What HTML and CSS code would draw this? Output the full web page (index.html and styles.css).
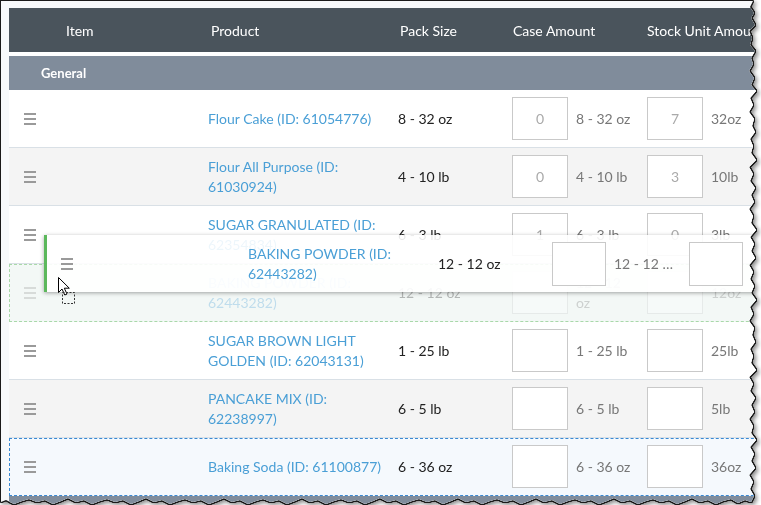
FILE: index.html
```html
<!DOCTYPE html>
<html>
<head>
<meta charset="utf-8">
<link rel="stylesheet" href="styles.css">
</head>
<body>
<div class="shot">
  <div class="frame">
    <div class="table">
      <div class="cols head">
        <div class="hc"></div>
        <div class="hc">Item</div>
        <div class="hc">Product</div>
        <div class="hc h-pack">Pack Size</div>
        <div class="hc h-case">Case Amount</div>
        <div class="hc h-stock">Stock Unit Amount</div>
      </div>
      <div class="gap"></div>
      <div class="group">General</div>

      <div class="cols row">
        <div class="c-handle"><span class="grip"></span></div>
        <div></div>
        <div class="c-prod">Flour Cake (ID: 61054776)</div>
        <div class="c-pack">8 - 32 oz</div>
        <div class="c-amt"><span class="box">0</span><span class="unit">8 - 32 oz</span></div>
        <div class="c-amt"><span class="box">7</span><span class="unit">32oz</span></div>
      </div>
      <div class="cols row alt">
        <div class="c-handle"><span class="grip"></span></div>
        <div></div>
        <div class="c-prod">Flour All Purpose (ID: 61030924)</div>
        <div class="c-pack">4 - 10 lb</div>
        <div class="c-amt"><span class="box">0</span><span class="unit">4 - 10 lb</span></div>
        <div class="c-amt"><span class="box">3</span><span class="unit">10lb</span></div>
      </div>
      <div class="cols row">
        <div class="c-handle"><span class="grip"></span></div>
        <div></div>
        <div class="c-prod">SUGAR GRANULATED (ID: 62354834)</div>
        <div class="c-pack">6 - 3 lb</div>
        <div class="c-amt"><span class="box">1</span><span class="unit">6 - 3 lb</span></div>
        <div class="c-amt"><span class="box">0</span><span class="unit">3lb</span></div>
      </div>
      <div class="cols row placeholder">
        <div class="c-handle"><span class="grip"></span></div>
        <div></div>
        <div class="c-prod">BAKING POWDER (ID: 62443282)</div>
        <div class="c-pack">12 - 12 oz</div>
        <div class="c-amt"><span class="box"></span><span class="unit">12 - 12 oz</span></div>
        <div class="c-amt"><span class="box"></span><span class="unit">12oz</span></div>
      </div>
      <div class="cols row">
        <div class="c-handle"><span class="grip"></span></div>
        <div></div>
        <div class="c-prod">SUGAR BROWN LIGHT GOLDEN (ID: 62043131)</div>
        <div class="c-pack">1 - 25 lb</div>
        <div class="c-amt"><span class="box"></span><span class="unit">1 - 25 lb</span></div>
        <div class="c-amt"><span class="box"></span><span class="unit">25lb</span></div>
      </div>
      <div class="cols row alt">
        <div class="c-handle"><span class="grip"></span></div>
        <div></div>
        <div class="c-prod">PANCAKE MIX (ID: 62238997)</div>
        <div class="c-pack">6 - 5 lb</div>
        <div class="c-amt"><span class="box"></span><span class="unit">6 - 5 lb</span></div>
        <div class="c-amt"><span class="box"></span><span class="unit">5lb</span></div>
      </div>
      <div class="cols row target">
        <div class="c-handle"><span class="grip"></span></div>
        <div></div>
        <div class="c-prod">Baking Soda (ID: 61100877)</div>
        <div class="c-pack">6 - 36 oz</div>
        <div class="c-amt"><span class="box"></span><span class="unit">6 - 36 oz</span></div>
        <div class="c-amt"><span class="box"></span><span class="unit">36oz</span></div>
      </div>
      <div class="group"></div>
    </div>

    <div class="cols card">
      <div class="c-handle"><span class="grip"></span></div>
      <div></div>
      <div class="c-prod">BAKING POWDER (ID: 62443282)</div>
      <div class="c-pack">12 - 12 oz</div>
      <div class="c-amt"><span class="box"></span><span class="unit">12 - 12 oz</span></div>
      <div class="c-amt c-last"><span class="box"></span><span class="unit">12oz</span></div>
    </div>

    <svg class="cursor" width="22" height="30" viewBox="0 0 22 30">
      <path d="M1.5 1.5 L1.5 16.5 L5 13 L7.8 19 L10 18 L7.3 12.2 L12.3 12.2 Z" fill="#fff" stroke="#000" stroke-width="1" stroke-linejoin="miter"/>
      <rect x="5.5" y="16.5" width="12" height="11" fill="none" stroke="#333" stroke-width="1" stroke-dasharray="2 1.5"/>
    </svg>
  </div>
</div>
</body>
</html>
```
FILE: styles.css
```css
* { box-sizing: border-box; }

body {
  margin: 0;
  background: #fff;
  font-family: Lato, "Noto Sans", sans-serif;
  font-size: 14px;
}

.shot {
  width: 761px;
  height: 505px;
  padding: 1px 0 0 1px;
  filter: drop-shadow(1px 0 0 #1a1a1a) drop-shadow(-1px 0 0 #1a1a1a)
          drop-shadow(0 1px 0 #1a1a1a) drop-shadow(0 -1px 0 #1a1a1a)
          drop-shadow(2px 2px 2px rgba(0, 0, 0, 0.45));
}

.frame {
  position: relative;
  width: 757px;
  height: 504px;
  background: #f7f9fb;
  padding: 7px 0 0 8px;
  overflow: hidden;
  clip-path: polygon(0 0, 752px 0, 749px 6px, 753px 12px, 750px 17px, 754px 24px, 748px 30px, 751px 37px, 749px 44px, 754px 50px, 750px 57px, 752px 63px, 748px 70px, 753px 77px, 750px 84px, 755px 90px, 749px 97px, 752px 104px, 748px 111px, 753px 118px, 751px 125px, 754px 131px, 749px 138px, 752px 145px, 750px 152px, 755px 159px, 748px 166px, 752px 173px, 749px 180px, 754px 187px, 750px 194px, 753px 201px, 748px 208px, 752px 215px, 750px 222px, 755px 229px, 749px 236px, 753px 243px, 750px 250px, 754px 257px, 748px 264px, 752px 271px, 749px 278px, 753px 285px, 750px 292px, 755px 299px, 749px 306px, 752px 313px, 748px 320px, 753px 327px, 751px 334px, 754px 341px, 749px 348px, 752px 355px, 750px 362px, 755px 369px, 748px 376px, 752px 383px, 749px 390px, 754px 397px, 750px 404px, 753px 411px, 748px 418px, 752px 425px, 750px 432px, 755px 439px, 749px 446px, 753px 453px, 750px 460px, 754px 467px, 748px 474px, 752px 481px, 749px 488px, 753px 495px, 750px 501px, 744px 499px, 737px 502px, 730px 498px, 722px 500px, 715px 503px, 707px 499px, 699px 501px, 691px 497px, 684px 500px, 676px 503px, 668px 499px, 660px 501px, 652px 498px, 645px 500px, 637px 503px, 629px 499px, 621px 501px, 613px 497px, 606px 500px, 598px 503px, 590px 499px, 582px 501px, 574px 498px, 567px 500px, 559px 503px, 551px 499px, 543px 501px, 535px 497px, 528px 500px, 520px 503px, 512px 499px, 504px 501px, 496px 498px, 489px 500px, 481px 503px, 473px 499px, 465px 501px, 457px 497px, 450px 500px, 442px 503px, 434px 499px, 426px 501px, 418px 498px, 411px 500px, 403px 503px, 395px 499px, 387px 501px, 379px 497px, 372px 500px, 364px 503px, 356px 499px, 348px 501px, 340px 498px, 333px 500px, 325px 503px, 317px 499px, 309px 501px, 301px 497px, 294px 500px, 286px 503px, 278px 499px, 270px 501px, 262px 498px, 255px 500px, 247px 503px, 239px 499px, 231px 501px, 223px 497px, 216px 500px, 208px 503px, 200px 499px, 192px 501px, 184px 498px, 177px 500px, 169px 503px, 161px 499px, 153px 501px, 145px 497px, 138px 500px, 130px 503px, 122px 499px, 114px 501px, 106px 498px, 99px 500px, 91px 503px, 83px 499px, 75px 501px, 67px 497px, 60px 500px, 52px 503px, 44px 499px, 36px 501px, 28px 498px, 21px 500px, 13px 503px, 5px 499px, 0 501px);
}

.table {
  width: 800px;
  background: #fff;
}

.cols {
  display: grid;
  grid-template-columns: 47px 145px 190px 114px 135px 169px;
  align-items: center;
}

.head {
  height: 44px;
  background: #4a545c;
  color: #fff;
  font-size: 14px;
}

.hc { padding-left: 10px; white-space: nowrap; }
.hc.h-pack { padding-left: 9px; }
.hc.h-case { padding-left: 8px; }
.hc.h-stock { padding-left: 7px; }

.gap { height: 4px; background: #fff; }

.group {
  height: 34px;
  background: #808c9b;
  color: #fff;
  font-weight: bold;
  font-size: 13px;
  padding-left: 32px;
  display: flex;
  align-items: center;
}

.row {
  height: 58px;
  background: #fff;
  border-bottom: 1px solid #d9e0e6;
}

.row.alt { background: #f4f4f4; }

.row.placeholder {
  background: #f3f8f6;
  border-bottom-color: transparent;
  outline: 1px dashed #a9d8a9;
  outline-offset: -1px;
}
.row.placeholder > * { opacity: 0.3; }

.row.target {
  background: #f5f9fd;
  border-bottom-color: transparent;
  outline: 1px dashed #3a89d3;
  outline-offset: -1px;
}

.c-handle { padding-left: 15px; display: flex; align-items: center; }

.grip {
  display: block;
  width: 12px;
  height: 2px;
  background: #9a9a9a;
  box-shadow: 0 -5px 0 #9a9a9a, 0 5px 0 #9a9a9a;
}

.c-prod {
  padding-left: 7px;
  color: #4a9fd6;
  line-height: 20px;
}

.c-pack {
  padding-left: 7px;
  color: #222;
}

.c-amt {
  padding-left: 7px;
  display: flex;
  align-items: center;
}

.box {
  flex: none;
  width: 56px;
  height: 43px;
  border: 1px solid #c9c9c9;
  background: #fff;
  color: #aaa;
  display: flex;
  align-items: center;
  justify-content: center;
}

.unit {
  margin-left: 8px;
  width: 56px;
  color: #777;
  line-height: 20px;
}

.card {
  position: absolute;
  left: 43px;
  top: 234px;
  width: 760px;
  height: 57px;
  padding-left: 2px;
  background: rgba(255, 255, 255, 0.9);
  border-left: 3px solid #5cb85c;
  box-shadow: 0 1px 4px rgba(0, 0, 0, 0.35);
}

.card .c-handle { padding-left: 12px; }
.card .c-last { padding-left: 9px; }
.card .box { width: 54px; height: 44px; }
.card .unit {
  white-space: nowrap;
  overflow: hidden;
  text-overflow: ellipsis;
  width: 60px;
}

.cursor {
  position: absolute;
  left: 56px;
  top: 275px;
}
```
